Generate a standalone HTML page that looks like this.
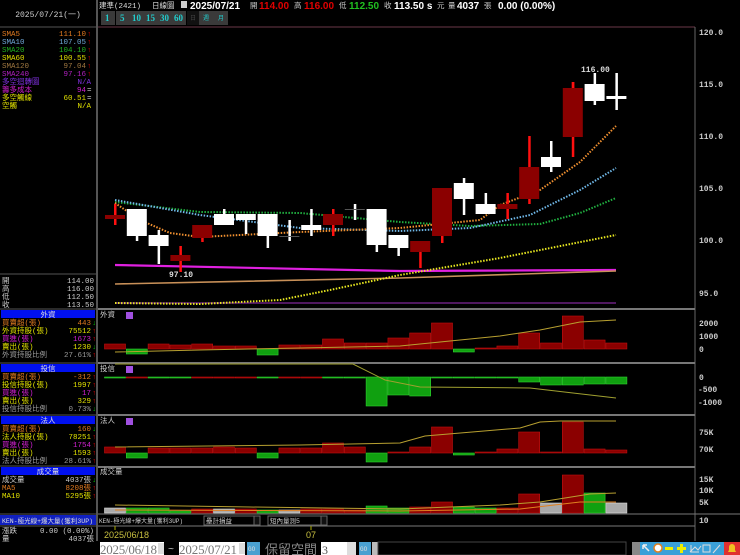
<!DOCTYPE html>
<html><head><meta charset="utf-8"><style>
body{margin:0;background:#000;width:740px;height:555px;overflow:hidden;font-family:"Liberation Sans","Noto Sans CJK TC",sans-serif}
svg{display:block}
.b{font-family:"Liberation Sans","Noto Sans CJK TC",sans-serif;font-weight:bold;font-size:10px}
</style></head><body>
<svg id="s" width="740" height="555" xmlns="http://www.w3.org/2000/svg" font-family="'Liberation Mono','Noto Sans CJK TC',monospace" font-size="7.5">
<rect width="740" height="555" fill="#000"/>
<!-- left panel -->
<line x1="97" y1="0" x2="97" y2="541" stroke="#555" stroke-width="2"/>
<line x1="0" y1="27" x2="96" y2="27" stroke="#555"/>
<text x="48" y="17" fill="#ccc" text-anchor="middle" font-size="8">2025/07/21(一)</text>
<g text-anchor="start">
<text x="2" y="36" fill="#e07a20">SMA5</text><text x="86" y="36" fill="#e07a20" text-anchor="end">111.10</text>
<text x="2" y="44" fill="#6fa8d8">SMA10</text><text x="86" y="44" fill="#6fa8d8" text-anchor="end">107.05</text>
<text x="2" y="52" fill="#20b020">SMA20</text><text x="86" y="52" fill="#20b020" text-anchor="end">104.10</text>
<text x="2" y="60" fill="#e0e000">SMA60</text><text x="86" y="60" fill="#e0e000" text-anchor="end">100.55</text>
<text x="2" y="68" fill="#a07840">SMA120</text><text x="86" y="68" fill="#a07840" text-anchor="end">97.04</text>
<text x="2" y="76" fill="#b020c0">SMA240</text><text x="86" y="76" fill="#b020c0" text-anchor="end">97.16</text>
<text x="2" y="84" fill="#8030e0">多空迴轉圖</text><text x="91" y="84" fill="#8030e0" text-anchor="end">N/A</text>
<text x="2" y="92" fill="#d020d0">籌多成本</text><text x="86" y="92" fill="#d020d0" text-anchor="end">94</text>
<text x="2" y="100" fill="#e0e000">多空觸線</text><text x="86" y="100" fill="#e0e000" text-anchor="end">60.51</text>
<text x="2" y="108" fill="#e0e000">空觸</text><text x="91" y="108" fill="#e0e000" text-anchor="end">N/A</text>
</g>
<g fill="#e00000" font-size="7"><text x="87" y="36">↑</text><text x="87" y="44">↑</text><text x="87" y="52">↑</text><text x="87" y="60">↑</text><text x="87" y="68">↑</text><text x="87" y="76">↑</text></g>
<text x="87" y="92" fill="#ccc">=</text><text x="87" y="100" fill="#ccc">=</text>
<line x1="0" y1="274" x2="96" y2="274" stroke="#555"/>
<g fill="#ccc"><text x="2" y="283">開</text><text x="94" y="283" text-anchor="end">114.00</text>
<text x="2" y="291">高</text><text x="94" y="291" text-anchor="end">116.00</text>
<text x="2" y="299">低</text><text x="94" y="299" text-anchor="end">112.50</text>
<text x="2" y="307">收</text><text x="94" y="307" text-anchor="end">113.50</text></g>
<line x1="0" y1="309" x2="96" y2="309" stroke="#555"/>
<line x1="0" y1="363" x2="96" y2="363" stroke="#555"/>
<line x1="0" y1="415" x2="96" y2="415" stroke="#555"/>
<line x1="0" y1="466" x2="96" y2="466" stroke="#555"/>
<line x1="0" y1="514" x2="96" y2="514" stroke="#555"/>
<rect x="1" y="310" width="94" height="8" fill="#0010f0"/><text x="48" y="317" fill="#ddd" text-anchor="middle">外資</text>
<text x="2" y="325" fill="#e07a20">買賣超(張)</text><text x="91" y="325" fill="#e07a20" text-anchor="end">443</text>
<text x="2" y="333" fill="#e0e000">外資持股(張)</text><text x="91" y="333" fill="#e0e000" text-anchor="end">75512</text>
<text x="2" y="341" fill="#d020d0">買進(張)</text><text x="91" y="341" fill="#d020d0" text-anchor="end">1673</text>
<text x="2" y="349" fill="#e0e000">賣出(張)</text><text x="91" y="349" fill="#e0e000" text-anchor="end">1230</text>
<text x="2" y="357" fill="#999">外資持股比例</text><text x="91" y="357" fill="#999" text-anchor="end">27.61%</text>
<rect x="1" y="364" width="94" height="8" fill="#0010f0"/><text x="48" y="371" fill="#ddd" text-anchor="middle">投信</text>
<text x="2" y="379" fill="#e07a20">買賣超(張)</text><text x="91" y="379" fill="#e07a20" text-anchor="end">-312</text>
<text x="2" y="387" fill="#e0e000">投信持股(張)</text><text x="91" y="387" fill="#e0e000" text-anchor="end">1997</text>
<text x="2" y="395" fill="#d020d0">買進(張)</text><text x="91" y="395" fill="#d020d0" text-anchor="end">17</text>
<text x="2" y="403" fill="#e0e000">賣出(張)</text><text x="91" y="403" fill="#e0e000" text-anchor="end">329</text>
<text x="2" y="411" fill="#999">投信持股比例</text><text x="91" y="411" fill="#999" text-anchor="end">0.73%</text>
<rect x="1" y="416" width="94" height="8" fill="#0010f0"/><text x="48" y="423" fill="#ddd" text-anchor="middle">法人</text>
<text x="2" y="431" fill="#e07a20">買賣超(張)</text><text x="91" y="431" fill="#e07a20" text-anchor="end">160</text>
<text x="2" y="439" fill="#e0e000">法人持股(張)</text><text x="91" y="439" fill="#e0e000" text-anchor="end">78251</text>
<text x="2" y="447" fill="#d020d0">買進(張)</text><text x="91" y="447" fill="#d020d0" text-anchor="end">1754</text>
<text x="2" y="455" fill="#e0e000">賣出(張)</text><text x="91" y="455" fill="#e0e000" text-anchor="end">1593</text>
<text x="2" y="463" fill="#999">法人持股比例</text><text x="91" y="463" fill="#999" text-anchor="end">28.61%</text>
<rect x="1" y="467" width="94" height="8" fill="#0010f0"/><text x="48" y="474" fill="#ddd" text-anchor="middle">成交量</text>
<text x="2" y="482" fill="#ccc">成交量</text><text x="91" y="482" fill="#ccc" text-anchor="end">4037張</text>
<text x="2" y="490" fill="#e07a20">MA5</text><text x="91" y="490" fill="#e07a20" text-anchor="end">8208張</text>
<text x="2" y="498" fill="#e0e000">MA10</text><text x="91" y="498" fill="#e0e000" text-anchor="end">5295張</text>
<g font-size="7"><text x="92" y="325" fill="#0c0">↓</text><text x="92" y="333" fill="#e00">↑</text><text x="92" y="341" fill="#e00">↑</text><text x="92" y="349" fill="#0c0">↓</text><text x="92" y="357" fill="#e00">↑</text>
<text x="92" y="379" fill="#e00">↑</text><text x="92" y="387" fill="#e00">↑</text><text x="92" y="395" fill="#e00">↑</text><text x="92" y="403" fill="#e00">↑</text><text x="92" y="411" fill="#0c0">↓</text>
<text x="92" y="431" fill="#0c0">↓</text><text x="92" y="439" fill="#e00">↑</text><text x="92" y="447" fill="#e00">↑</text><text x="92" y="455" fill="#e00">↑</text><text x="92" y="463" fill="#e00">↑</text>
<text x="92" y="482" fill="#0c0">↓</text><text x="92" y="490" fill="#e00">↑</text><text x="92" y="498" fill="#e00">↑</text></g>
<rect x="0" y="515" width="96" height="10" fill="#1020c0"/><text x="2" y="523" fill="#ddd" font-size="6.5">KEN-極光線+爆大量(獲利3UP)</text>
<line x1="0" y1="526" x2="96" y2="526" stroke="#555"/>
<text x="2" y="533" fill="#ccc">漲跌</text><text x="94" y="533" fill="#ccc" text-anchor="end">0.00 (0.00%)</text>
<text x="2" y="541" fill="#ccc">量</text><text x="94" y="541" fill="#ccc" text-anchor="end">4037張</text>

<!-- top bar -->
<text x="99" y="8" fill="#ddd">建準(2421)</text>
<text x="152" y="8" fill="#ddd">日線圖</text>
<rect x="181" y="1" width="6" height="7" fill="#ccc"/>
<text x="190" y="9" class="b" fill="#fff">2025/07/21</text>
<text x="250" y="8" fill="#ccc">開</text><text x="259" y="9" class="b" fill="#e00000">114.00</text>
<text x="294" y="8" fill="#ccc">高</text><text x="304" y="9" class="b" fill="#e00000">116.00</text>
<text x="339" y="8" fill="#ccc">低</text><text x="349" y="9" class="b" fill="#20c020">112.50</text>
<text x="384" y="8" fill="#ccc">收</text><text x="394" y="9" class="b" fill="#fff">113.50 s</text><text x="437" y="8" fill="#ccc">元</text>
<text x="448" y="8" fill="#ccc">量</text><text x="457" y="9" class="b" fill="#fff">4037</text><text x="484" y="8" fill="#ccc">張</text>
<text x="498" y="9" class="b" fill="#fff">0.00 (0.00%)</text>
<g font-size="9" font-family="'Liberation Serif',serif">
<rect x="101" y="11" width="14" height="14" fill="#3a3a3a"/><text x="105" y="21" fill="#2cc" font-weight="bold">1</text>
<rect x="116" y="11" width="14" height="14" fill="#3a3a3a"/><text x="120" y="21" fill="#2cc" font-weight="bold">5</text>
<rect x="130" y="11" width="14" height="14" fill="#3a3a3a"/><text x="132" y="21" fill="#2cc" font-weight="bold">10</text>
<rect x="144" y="11" width="14" height="14" fill="#3a3a3a"/><text x="146" y="21" fill="#2cc" font-weight="bold">15</text>
<rect x="158" y="11" width="14" height="14" fill="#3a3a3a"/><text x="160" y="21" fill="#2cc" font-weight="bold">30</text>
<rect x="172" y="11" width="14" height="14" fill="#3a3a3a"/><text x="174" y="21" fill="#2cc" font-weight="bold">60</text>
<rect x="187" y="11" width="12" height="14" fill="#111"/><text x="190" y="20" fill="#444" font-size="6">日</text>
<rect x="199" y="11" width="15" height="14" fill="#3a3a3a"/><text x="203" y="20" fill="#2cc" font-size="6">週</text>
<rect x="214" y="11" width="14" height="14" fill="#3a3a3a"/><text x="218" y="20" fill="#2cc" font-size="6">月</text>
</g>
<!-- main chart frame -->
<line x1="98" y1="27" x2="695" y2="27" stroke="#6a3848"/>
<line x1="695" y1="27" x2="695" y2="541" stroke="#666"/>
<line x1="98" y1="309" x2="695" y2="309" stroke="#777" stroke-width="2"/>
<line x1="98" y1="363" x2="695" y2="363" stroke="#777" stroke-width="2"/>
<line x1="98" y1="415" x2="695" y2="415" stroke="#777" stroke-width="2"/>
<line x1="98" y1="467" x2="695" y2="467" stroke="#777" stroke-width="2"/>
<line x1="98" y1="514" x2="740" y2="514" stroke="#777"/>
<line x1="98" y1="526" x2="695" y2="526" stroke="#777"/>
<g fill="#ccc" font-weight="bold" font-size="8"><text x="699" y="35">120.0</text><text x="699" y="87">115.0</text><text x="699" y="139">110.0</text><text x="699" y="191">105.0</text><text x="699" y="243">100.0</text><text x="699" y="296">95.0</text>
<text x="699" y="326">2000</text><text x="699" y="339">1000</text><text x="699" y="352">0</text>
<text x="699" y="380">0</text><text x="698" y="392">-500</text><text x="698" y="405">-1000</text>
<text x="699" y="435">75K</text><text x="699" y="452">70K</text>
<text x="699" y="482">15K</text><text x="699" y="493">10K</text><text x="699" y="505">5K</text><text x="699" y="523">10</text></g>
<text x="581" y="72" fill="#ddd" font-weight="bold" font-size="8">116.00</text>
<text x="169" y="277" fill="#ddd" font-weight="bold" font-size="8">97.10</text>
<g fill="#ccc"><text x="100" y="317">外資</text><text x="100" y="371">投信</text><text x="100" y="423">法人</text><text x="100" y="474">成交量</text></g>
<g fill="#a050e0"><rect x="126" y="312" width="7" height="7"/><rect x="126" y="366" width="7" height="7"/><rect x="126" y="418" width="7" height="7"/></g>
<text x="99" y="523" fill="#ccc" font-size="6">KEN-極光線+爆大量(獲利3UP)</text>
<rect x="204" y="516" width="56" height="9" fill="#000" stroke="#666"/><text x="206" y="523" fill="#ccc" font-size="6.5">壘計損益</text><rect x="254" y="516" width="6" height="9" fill="#111" stroke="#666"/>
<rect x="268" y="516" width="59" height="9" fill="#000" stroke="#666"/><text x="270" y="523" fill="#ccc" font-size="6.5">短內量測5</text><rect x="321" y="516" width="6" height="9" fill="#111" stroke="#666"/>
<line x1="115" y1="526" x2="115" y2="530" stroke="#aa0"/><line x1="311" y1="526" x2="311" y2="530" stroke="#aa0"/>
<text x="104" y="538" fill="#c8c040" font-size="9" font-family="'Liberation Sans',sans-serif">2025/06/18</text><text x="306" y="538" fill="#c8c040" font-size="9" font-family="'Liberation Sans',sans-serif">07</text>
<g id="g"></g>
<!-- bottom bar -->
<rect x="100" y="542" width="64" height="13" fill="#fff"/><text x="100" y="554" fill="#777" font-size="13" font-family="'Liberation Serif',serif" textLength="57">2025/06/18</text>
<rect x="158" y="543" width="6" height="11" fill="#ddd"/>
<text x="168" y="552" fill="#ccc" font-size="10">~</text>
<rect x="179" y="542" width="66" height="13" fill="#fff"/><text x="179" y="554" fill="#777" font-size="13" font-family="'Liberation Serif',serif" textLength="58">2025/07/21</text>
<rect x="239" y="543" width="6" height="11" fill="#ddd"/>
<rect x="247" y="542" width="13" height="13" fill="#4aa0d0"/><text x="248" y="551" fill="#ddd" font-size="6">GO</text>
<text x="265" y="554" fill="#888" font-size="13" font-family="'Liberation Sans','Noto Sans CJK TC',sans-serif">保留空間</text>
<rect x="321" y="542" width="26" height="13" fill="#fff"/><text x="322" y="554" fill="#555" font-size="12" font-family="'Liberation Serif',serif">3</text>
<rect x="347" y="542" width="9" height="13" fill="#ddd"/>
<rect x="359" y="542" width="12" height="13" fill="#4aa0d0"/><text x="360" y="551" fill="#ddd" font-size="6">GO</text>
<rect x="372" y="542" width="6" height="13" fill="#bbb"/>
<rect x="378" y="542" width="248" height="13" fill="#000" stroke="#444"/>
<rect x="632" y="542" width="8" height="13" fill="#888"/>
<rect x="640" y="542" width="84" height="13" fill="#3aa0d8"/>
<g stroke="#eee" stroke-width="1.5" fill="none"><path d="M643 545 l6 6 M643 545 h4 M643 545 v4"/><circle cx="658" cy="548" r="4" fill="#fff" stroke="#e08020"/></g>
<rect x="665" y="547" width="8" height="3" fill="#ee0"/><rect x="677" y="547" width="9" height="3" fill="#ee0"/><rect x="680" y="544" width="3" height="9" fill="#ee0"/>
<g stroke="#ddd" fill="none"><path d="M690 552 l5-5 l3 3 l3-4 M691 545 v7 h8"/><rect x="703" y="545" width="7" height="7"/><path d="M713 553 l7-8"/></g>
<rect x="724" y="542" width="16" height="13" fill="#e03030"/><path d="M728 552 h8 l-1-2 v-3 a3 3 0 0 0-6 0 v3 z" fill="#f0c020"/>
</svg>
<script>
var NS="http://www.w3.org/2000/svg",g=document.getElementById("g");
function el(t,a){var e=document.createElementNS(NS,t);for(var k in a)e.setAttribute(k,a[k]);g.appendChild(e);return e}
function cx(i){return 115+21.8*i}
function pl(pts,col,w,dash){el("polyline",{points:pts.map(p=>p.join(",")).join(" "),fill:"none",stroke:col,"stroke-width":w,"stroke-dasharray":dash||""})}
pl([[115,265],[400,271],[616,270]],"#e020e0",2.2);
pl([[115,284],[400,278],[616,271]],"#c89058",1.6);
pl([[115,303],[616,303]],"#6a2080",1.5);
pl([[115,303],[200,304],[280,300],[330,290],[400,275],[500,258],[616,235]],"#e8e820",2,"1.5,1.5");
pl([[115,202],[200,212],[300,213],[400,222],[470,226],[540,224],[580,213],[616,198]],"#20b040",2,"1.5,1.5");
pl([[115,200],[200,215],[300,228],[400,231],[470,228],[530,215],[580,190],[616,168]],"#70b8e8",2,"1.5,1.5");
pl([[115,203],[140,220],[170,233],[200,237],[300,232],[400,228],[480,220],[500,205],[540,190],[580,162],[616,126]],"#f09030",2,"1.5,1.5");
var C=[["r",215,219,204,225],["w",209,236,209,241],["w",235,246,230,264],["r",255,261,246,272],["r",225,238,225,242],["w",214,225,209,225],["w",214,220,214,234],["w",214,236,214,248],["c",236,236,220,241],["w",225,230,209,236],["r",214,225,209,236],["c",209,209,204,220],["w",209,245,209,252],["w",235,248,235,256],["r",241,252,241,268],["r",188,236,188,243],["w",183,199,178,215],["w",204,214,193,214],["r",204,209,193,219],["r",167,199,136,204],["w",157,167,141,172],["r",88,137,82,157],["w",84,101,73,105],["c",96,99,73,110]];
C.forEach(function(c,i){var x=cx(i),t=c[0];
 if(t=="r"){el("rect",{x:x-1,y:c[3],width:2.5,height:c[4]-c[3],fill:"#ff1010"});el("rect",{x:x-10,y:c[1],width:20,height:Math.max(3,c[2]-c[1]),fill:"#8b0000"});}
 else if(t=="w"){el("rect",{x:x-1,y:c[3],width:2.5,height:c[4]-c[3],fill:"#fff"});el("rect",{x:x-10,y:c[1],width:20,height:c[2]-c[1],fill:"#fff"});}
 else{el("rect",{x:x-1,y:c[3],width:2.5,height:c[4]-c[3],fill:"#fff"});el("rect",{x:x-10,y:c[1],width:20,height:Math.max(1,c[2]-c[1]),fill:i==23?"#fff":"#555"});}
});
el("rect",{x:cx(21)-1,y:82,width:2.5,height:6,fill:"#ff1010"});
function bars(base,tops,cols){tops.forEach(function(t,i){var x=cx(i),c=cols[i];var y=Math.min(t,base),h=Math.max(1,Math.abs(t-base));
 var f=c=="g"?"#10a010":c=="s"?"#aaa":"#8b0000",s=c=="g"?"#30d030":c=="s"?"#ddd":"#c01010";
 el("rect",{x:x-10.5,y:y,width:21,height:h,fill:f,stroke:s,"stroke-width":0.6});});}
bars(349,[344,354,344,345,344,346,346,355,345,345,339,343,343,338,333,323,352,348,346,333,343,316,340,343],
 "rgrrrrrgrrrrrrrrgrrrrrrr".split(""));
pl([[115,352],[200,350],[300,348],[400,346],[440,342],[500,336],[540,330],[580,322],[616,320]],"#b8a030",1);
bars(377,[378,378,377,378,378,377,377,378,378,377,378,378,406,395,396,378,378,378,377,382,385,385,384,384],
 "grggrrrgrrgggggggggggggg".split(""));
pl([[115,364],[353,364],[385,380],[420,387],[530,388],[616,398]],"#a0a030",1);
bars(453,[447,458,448,448,448,447,448,458,448,448,443,447,462,452,447,427,455,452,449,432,452,422,449,450],
 "rgrrrrrgrrrrgrrrgrrrrrrr".split(""));
pl([[115,447],[300,445],[400,443],[425,436],[520,428],[540,422],[560,421],[616,421]],"#b8a030",1);
bars(513,[508,508,508,511,509,509,509,510,510,509,509,510,506,508,507,502,507,508,508,494,503,475,493,503],
 "sgggrsrgsrrrggrrggrrsrgs".split(""));
pl([[115,505],[250,507],[400,509],[500,505],[540,502],[590,494],[616,493]],"#b8a030",1);
pl([[115,510],[400,511],[520,509],[580,502],[616,502]],"#e08020",1);
</script>
</body></html>
